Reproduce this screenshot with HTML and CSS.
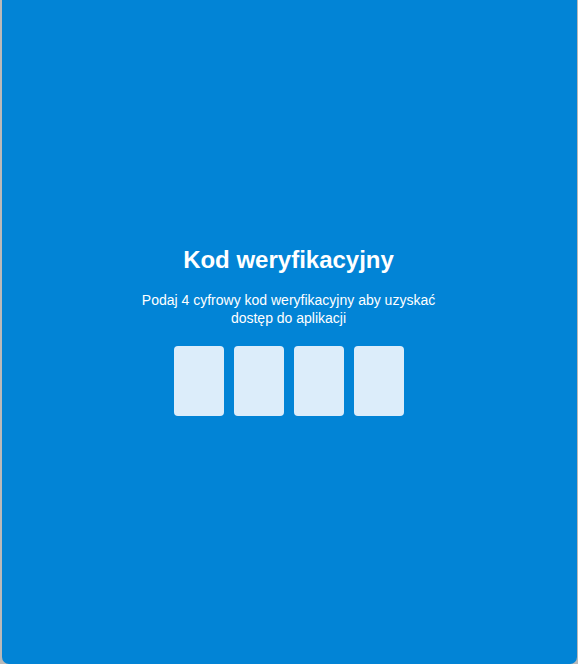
FILE: index.html
```html
<!DOCTYPE html>
<html lang="pl">
<head>
<meta charset="utf-8">
<title>Kod weryfikacyjny</title>
<link rel="stylesheet" href="styles.css">
</head>
<body>
<main class="panel">
  <div class="content">
    <h1 class="title">Kod weryfikacyjny</h1>
    <p class="desc">Podaj 4 cyfrowy kod weryfikacyjny aby uzyskać dostęp do aplikacji</p>
    <div class="code">
      <input class="digit" type="text" maxlength="1" inputmode="numeric">
      <input class="digit" type="text" maxlength="1" inputmode="numeric">
      <input class="digit" type="text" maxlength="1" inputmode="numeric">
      <input class="digit" type="text" maxlength="1" inputmode="numeric">
    </div>
  </div>
</main>
</body>
</html>
```
FILE: styles.css
```css
html, body {
  margin: 0;
  padding: 0;
  height: 100%;
}
body {
  background: #b9b9b9;
  font-family: "Liberation Sans", Arial, sans-serif;
  padding: 0 1px 0 2px;
  box-sizing: border-box;
}
.panel {
  height: 664px;
  background: #0284d6;
  border-radius: 0 0 7px 7px;
  display: flex;
  align-items: center;
  justify-content: center;
  color: #fff;
}
.content {
  display: flex;
  flex-direction: column;
  align-items: center;
  text-align: center;
  margin: -2px 2px 0 0;
}
.title {
  margin: 0;
  font-size: 24px;
  font-weight: bold;
  line-height: 28px;
}
.desc {
  margin: 17px 0 0;
  font-size: 14px;
  line-height: 18px;
  width: 310px;
}
.code {
  display: flex;
  gap: 10px;
  margin-top: 19px;
}
.digit {
  width: 50px;
  height: 70px;
  border: none;
  border-radius: 4px;
  background: #dcedfa;
  padding: 0;
  box-sizing: border-box;
  outline: none;
}
```
